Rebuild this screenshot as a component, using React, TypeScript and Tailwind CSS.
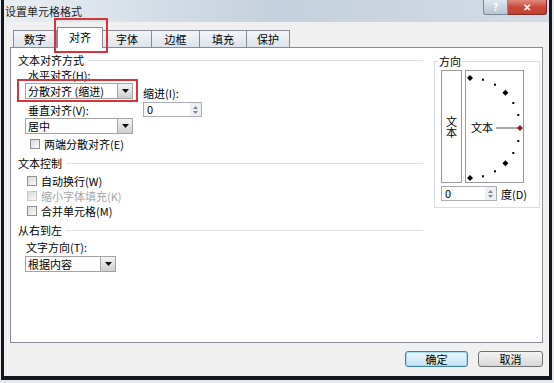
import React from "react";

const Tri = () => (
  <svg width="7" height="4" viewBox="0 0 7 4">
    <path d="M0 0h7L3.5 4z" fill="#111" />
  </svg>
);

function Select({ text, w }: { text: string; w: string }) {
  return (
    <div className={`flex h-[16px] border border-[#a3a3a3] bg-white ${w}`}>
      <div className="flex-1 pl-[2px] leading-[14px] text-[11px] text-black">{text}</div>
      <div className="flex w-[15px] items-center justify-center border-l border-[#a8a8a8] bg-gradient-to-b from-[#f4f4f4] to-[#cfcfcf]">
        <Tri />
      </div>
    </div>
  );
}

function Spinner({ w }: { w: string }) {
  return (
    <div className={`flex h-[15px] border border-[#abadb3] bg-white ${w}`}>
      <div className="flex-1 pl-[3px] text-[11px] leading-[13px] text-black">0</div>
      <div className="flex w-[11px] flex-col items-center justify-center gap-[2px] bg-[#eef0f3]">
        <svg width="5" height="3" viewBox="0 0 5 3">
          <path d="M0 3h5L2.5 0z" fill="#7a8a9a" />
        </svg>
        <svg width="5" height="3" viewBox="0 0 5 3">
          <path d="M0 0h5L2.5 3z" fill="#7a8a9a" />
        </svg>
      </div>
    </div>
  );
}

function Check({ label, disabled }: { label: string; disabled?: boolean }) {
  return (
    <div className="flex h-[14px] items-center gap-[4px]">
      <div
        className={`h-[10px] w-[10px] border bg-gradient-to-br from-[#d8d8d8] to-[#fbfbfb] ${
          disabled ? "border-[#c8c8c8]" : "border-[#8e8f8f]"
        }`}
      />
      <span className={`text-[11px] leading-[14px] ${disabled ? "text-[#a6a6a6]" : "text-black"}`}>{label}</span>
    </div>
  );
}

function Header({ text }: { text: string }) {
  return (
    <div className="flex h-[14px] items-center">
      <span className="text-[11px] leading-[14px] text-black">{text}</span>
      <div className="ml-[4px] h-px flex-1 bg-[#dfe3e8]" />
    </div>
  );
}

function Dial() {
  const cx = 4;
  const cy = 57;
  const r = 50;
  const pts: React.ReactElement[] = [];
  for (let i = 0; i <= 12; i++) {
    const a = ((-90 + i * 15) * Math.PI) / 180;
    const x = cx + r * Math.cos(a);
    const y = cy + r * Math.sin(a);
    if (i % 3 === 0) {
      const s = 3;
      pts.push(
        <path
          key={i}
          d={`M${x} ${y - s}L${x + s} ${y}L${x} ${y + s}L${x - s} ${y}z`}
          fill={i === 6 ? "#8b1d24" : "#000"}
        />
      );
    } else {
      pts.push(<rect key={i} x={x - 1} y={y - 1} width="2" height="2" fill="#000" />);
    }
  }
  return (
    <svg width="57" height="111" viewBox="0 0 57 111" className="block">
      <text x="5" y="61" fontSize="11" fill="#000" fontFamily="Noto Sans CJK SC, sans-serif">
        文本
      </text>
      <line x1="30" y1="57" x2="52" y2="57" stroke="#555" strokeWidth="1" />
      {pts}
    </svg>
  );
}

export default function App() {
  const tabs = [
    { t: "数字", w: "w-[44px]" },
    { t: "对齐", w: "w-[46px]", sel: true },
    { t: "字体", w: "w-[49px]" },
    { t: "边框", w: "w-[48px]" },
    { t: "填充", w: "w-[47px]" },
    { t: "保护", w: "w-[43px]" },
  ];
  return (
    <div className="relative h-[383px] w-[554px] overflow-hidden bg-[#e6e9ed] font-['Noto_Sans_CJK_SC','Noto_Sans',sans-serif]">
      <div className="ml-[1px] flex h-[380px] w-[551px] flex-col border-b-[4px] border-l-[3px] border-r-[3px] border-[#15171c] bg-[#f0f0f0]">
        {/* title bar */}
        <div className="flex h-[22px] items-start bg-gradient-to-r from-[#e9eef3] via-[#c4d0dd] to-[#d3dce6]">
          <div className="pl-[1px] pt-[4px] text-[11px] leading-[14px] text-[#1e1e1e]">设置单元格格式</div>
          <div className="ml-auto mr-[2px] flex">
            <div className="flex h-[15px] w-[25px] items-center justify-center rounded-bl-[3px] border border-t-0 border-[#7c8797] bg-gradient-to-b from-[#dfe6ee] to-[#b7c4d2] text-[10px] font-bold leading-none text-white">
              ?
            </div>
            <div className="flex h-[15px] w-[39px] items-center justify-center rounded-br-[3px] border border-l-0 border-t-0 border-[#7a2c25] bg-gradient-to-b from-[#e08a7c] via-[#c9493a] to-[#c2402f] text-[10px] font-bold leading-none text-white">
              ✕
            </div>
          </div>
        </div>
        {/* body */}
        <div className="flex flex-1 flex-col px-[6px]">
          {/* tabs */}
          <div className="mt-[5px] flex h-[20px] items-end pl-[3px]">
            {tabs.map((tb) =>
              tb.sel ? (
                <div
                  key={tb.t}
                  className={`relative z-10 -mb-px flex h-[21px] items-center justify-center border border-b-0 border-[#898c95] bg-white pb-[2px] text-[11px] text-black ${tb.w}`}
                >
                  {tb.t}
                </div>
              ) : (
                <div
                  key={tb.t}
                  className={`flex h-[17px] items-center justify-center border border-b-0 border-l-0 border-[#898c95] bg-gradient-to-b from-[#f3f5f8] to-[#dde3ea] text-[11px] text-black first:border-l ${tb.w}`}
                >
                  {tb.t}
                </div>
              )
            )}
          </div>
          {/* panel */}
          <div className="flex h-[296px] border border-[#898c95] bg-white">
            <div className="w-[412px] pl-[7px] pt-[5px]">
              <Header text="文本对齐方式" />
              <div className="flex">
                <div className="pl-[7px]">
                  <div className="ml-[3px] mt-[1px] text-[11px] leading-[14px]">水平对齐(H):</div>
                  <div className="mt-[1px]">
                    <Select text="分散对齐 (缩进)" w="w-[108px]" />
                  </div>
                  <div className="ml-[3px] mt-[4px] text-[11px] leading-[14px]">垂直对齐(V):</div>
                  <div className="mt-[1px]">
                    <Select text="居中" w="w-[108px]" />
                  </div>
                  <div className="mt-[3px] pl-[5px]">
                    <Check label="两端分散对齐(E)" />
                  </div>
                </div>
                <div className="ml-[10px]">
                  <div className="mt-[19px] text-[11px] leading-[14px]">缩进(I):</div>
                  <div className="mt-[2px]">
                    <Spinner w="w-[59px]" />
                  </div>
                </div>
              </div>
              <div className="mt-[5px]">
                <Header text="文本控制" />
              </div>
              <div className="pl-[9px]">
                <div className="mt-[4px]">
                  <Check label="自动换行(W)" />
                </div>
                <div className="mt-[1px]">
                  <Check label="缩小字体填充(K)" disabled />
                </div>
                <div className="mt-[1px]">
                  <Check label="合并单元格(M)" />
                </div>
              </div>
              <div className="mt-[5px]">
                <Header text="从右到左" />
              </div>
              <div className="mt-[3px] pl-[8px] text-[11px] leading-[14px]">文字方向(T):</div>
              <div className="mt-[2px] pl-[7px]">
                <Select text="根据内容" w="w-[91px]" />
              </div>
            </div>
            {/* orientation */}
            <div className="ml-auto mr-[2px] mt-[13px] w-[106px]">
              <div className="relative h-[147px] border border-[#d5dce3] pl-[6px] pt-[8px]">
                <div className="absolute -top-[8px] left-[3px] bg-white px-[1px] text-[11px] leading-[14px]">方向</div>
                <div className="flex gap-[3px]">
                  <div className="flex h-[113px] w-[21px] items-center justify-center border border-[#9a9a9a]">
                    <span className="text-[11px] leading-[14px] [writing-mode:vertical-rl] [text-orientation:upright]">文本</span>
                  </div>
                  <div className="h-[113px] w-[59px] border border-[#9a9a9a]">
                    <Dial />
                  </div>
                </div>
                <div className="mt-[3px] flex items-center">
                  <Spinner w="w-[56px]" />
                  <span className="ml-[4px] text-[11px] leading-[14px]">度(D)</span>
                </div>
              </div>
            </div>
          </div>
          {/* buttons */}
          <div className="mt-[8px] flex justify-end gap-[10px]">
            <div className="flex h-[16px] w-[63px] items-center justify-center rounded-[3px] border border-[#3c7fb1] bg-gradient-to-b from-[#eaf6fd] to-[#c4e5f6] text-[11px] shadow-[inset_0_0_0_1px_#a9d9f4]">
              确定
            </div>
            <div className="flex h-[16px] w-[65px] items-center justify-center rounded-[3px] border border-[#707070] bg-gradient-to-b from-[#f3f3f3] to-[#d8d8d8] text-[11px]">
              取消
            </div>
          </div>
        </div>
      </div>
      {/* red annotation boxes */}
      <div className="absolute left-[54px] top-[18px] h-[35px] w-[54px] border-2 border-[#d8323a]" />
      <div className="absolute left-[17px] top-[79px] h-[23px] w-[121px] border-2 border-[#d8323a]" />
    </div>
  );
}
